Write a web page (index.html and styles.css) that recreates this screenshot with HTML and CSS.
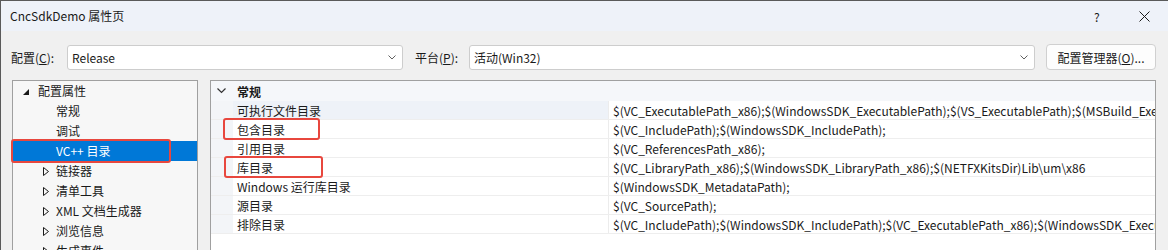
FILE: index.html
```html
<!DOCTYPE html>
<html lang="zh-CN">
<head>
<meta charset="utf-8">
<title>CncSdkDemo 属性页</title>
<link rel="stylesheet" href="styles.css">
</head>
<body>
<div class="window">
  <div class="titlebar">
    <span class="title">CncSdkDemo 属性页</span>
    <span class="help">?</span>
    <span class="close"><svg width="11" height="11" viewBox="0 0 11 11"><path d="M0.5 0.5 L10.5 10.5 M10.5 0.5 L0.5 10.5" stroke="#1a1a1a" stroke-width="1" fill="none"/></svg></span>
  </div>
  <div class="toolbar">
    <span class="label">配置(<u>C</u>):</span>
    <div class="combo combo-config"><span>Release</span><svg class="chev" width="8" height="5" viewBox="0 0 8 5"><path d="M0.5 0.5 L4 4 L7.5 0.5" stroke="#606060" fill="none"/></svg></div>
    <span class="label label-platform">平台(<u>P</u>):</span>
    <div class="combo combo-platform"><span>活动(Win32)</span><svg class="chev" width="8" height="5" viewBox="0 0 8 5"><path d="M0.5 0.5 L4 4 L7.5 0.5" stroke="#606060" fill="none"/></svg></div>
    <button class="btn">配置管理器(<u>O</u>)...</button>
  </div>
  <div class="main">
    <div class="tree">
      <div class="node"><svg class="tri" width="6" height="6" viewBox="0 0 6 6"><polygon points="6,0 6,6 0,6" fill="#1a1a1a"/></svg><span class="tlabel">配置属性</span></div>
      <div class="node child"><span class="tlabel">常规</span></div>
      <div class="node child"><span class="tlabel">调试</span></div>
      <div class="node child selected"><span class="tlabel">VC++ 目录</span></div>
      <div class="node child"><svg class="tri2" width="6" height="9" viewBox="0 0 6 9"><polygon points="0.5,0.5 5.5,4.5 0.5,8.5" fill="none" stroke="#1a1a1a"/></svg><span class="tlabel">链接器</span></div>
      <div class="node child"><svg class="tri2" width="6" height="9" viewBox="0 0 6 9"><polygon points="0.5,0.5 5.5,4.5 0.5,8.5" fill="none" stroke="#1a1a1a"/></svg><span class="tlabel">清单工具</span></div>
      <div class="node child"><svg class="tri2" width="6" height="9" viewBox="0 0 6 9"><polygon points="0.5,0.5 5.5,4.5 0.5,8.5" fill="none" stroke="#1a1a1a"/></svg><span class="tlabel">XML 文档生成器</span></div>
      <div class="node child"><svg class="tri2" width="6" height="9" viewBox="0 0 6 9"><polygon points="0.5,0.5 5.5,4.5 0.5,8.5" fill="none" stroke="#1a1a1a"/></svg><span class="tlabel">浏览信息</span></div>
      <div class="node child"><svg class="tri2" width="6" height="9" viewBox="0 0 6 9"><polygon points="0.5,0.5 5.5,4.5 0.5,8.5" fill="none" stroke="#1a1a1a"/></svg><span class="tlabel">生成事件</span></div>
      <div class="mark mark-tree"></div>
    </div>
    <div class="grid">
      <div class="cat">
        <div class="margin"><svg width="9" height="6" viewBox="0 0 9 6"><path d="M0.5 0.5 L4.5 4.5 L8.5 0.5" stroke="#333" stroke-width="1.2" fill="none"/></svg></div>
        <div class="catname">常规</div>
      </div>
      <div class="row current"><div class="margin"></div><div class="name">可执行文件目录</div><div class="value">$(VC_ExecutablePath_x86);$(WindowsSDK_ExecutablePath);$(VS_ExecutablePath);$(MSBuild_ExecutablePath);$(FxCopDir);$(PATH);</div></div>
      <div class="row"><div class="margin"></div><div class="name">包含目录</div><div class="value">$(VC_IncludePath);$(WindowsSDK_IncludePath);</div></div>
      <div class="row"><div class="margin"></div><div class="name">引用目录</div><div class="value">$(VC_ReferencesPath_x86);</div></div>
      <div class="row"><div class="margin"></div><div class="name">库目录</div><div class="value">$(VC_LibraryPath_x86);$(WindowsSDK_LibraryPath_x86);$(NETFXKitsDir)Lib\um\x86</div></div>
      <div class="row"><div class="margin"></div><div class="name">Windows 运行库目录</div><div class="value">$(WindowsSDK_MetadataPath);</div></div>
      <div class="row"><div class="margin"></div><div class="name">源目录</div><div class="value">$(VC_SourcePath);</div></div>
      <div class="row"><div class="margin"></div><div class="name">排除目录</div><div class="value">$(VC_IncludePath);$(WindowsSDK_IncludePath);$(VC_ExecutablePath_x86);$(WindowsSDK_ExecutablePath);$(VS_ExecutablePath);</div></div>
      <div class="mark mark-inc"></div>
      <div class="mark mark-lib"></div>
    </div>
  </div>
</div>
</body>
</html>
```
FILE: styles.css
```css
* { box-sizing: border-box; }
html, body { margin: 0; padding: 0; }
body {
  width: 1168px;
  height: 250px;
  overflow: hidden;
  background: #f0f0f0;
  font-family: "Noto Sans CJK SC", "Noto Sans", sans-serif;
  font-size: 12px;
  color: #1a1a1a;
}
.window {
  width: 1168px;
  height: 250px;
  border-left: 1px solid #5a5a5a;
  border-top: 1px solid #5a5a5a;
  background: #f0f0f0;
  overflow: hidden;
}
.titlebar {
  height: 30px;
  background: #eef2f9;
  display: flex;
  align-items: center;
  padding-left: 9px;
}
.title { flex: 1; line-height: 16px; }
.help { width: 14px; margin-right: 31px; font-size: 12px; }
.close { width: 20px; margin-right: 9px; display: flex; }
.toolbar {
  display: flex;
  align-items: center;
  height: 26px;
  margin-top: 13px;
  padding-left: 10px;
}
.label { width: 56px; }
.label-platform { margin-left: 12px; width: 54px; }
u { text-decoration: underline; text-underline-offset: 1px; }
.combo {
  height: 25px;
  background: #fff;
  border: 1px solid #cdcdcd;
  border-radius: 3px;
  display: flex;
  align-items: center;
  padding-left: 4px;
  padding-right: 6px;
}
.combo span { flex: 1; }
.combo-config { width: 336px; }
.combo-platform { width: 566px; }
.chev { flex: none; }
.btn {
  margin-left: 11px;
  width: 110px;
  height: 26px;
  background: #fdfdfd;
  border: 1px solid #d0d0d0;
  border-radius: 4px;
  font: inherit;
  color: #1a1a1a;
  padding: 0;
}
.main {
  display: flex;
  margin-top: 10px;
  padding-left: 11px;
  gap: 12px;
}
.tree {
  position: relative;
  width: 186px;
  height: 200px;
  background: #f7f7f7;
  border: 1px solid #a0a0a0;
  border-bottom: none;
}
.node {
  height: 20px;
  display: flex;
  align-items: center;
  padding-left: 10px;
}
.node .tri { margin-top: 1px; margin-right: 9px; }
.node.child { padding-left: 43px; }
.node.child .tri2 { margin-left: -13px; margin-right: 7px; }
.node.selected { background: #0078d7; color: #fff; }
.tlabel { line-height: 16px; }
.mark {
  position: absolute;
  border: 2px solid #e8473e;
  border-radius: 3px;
}
.mark-tree { left: -2px; top: 58px; width: 160px; height: 24px; }
.grid {
  position: relative;
  width: 946px;
  height: 200px;
  background: #fff;
  border: 1px solid #a0a0a0;
  border-bottom: none;
}
.cat {
  height: 20px;
  display: flex;
  background: #f5f7fa;
}
.margin {
  width: 22px;
  background: #f3f5f8;
  display: flex;
  align-items: center;
  justify-content: center;
  flex: none;
}
.cat .margin { background: transparent; padding-right: 2px; }
.catname {
  display: flex;
  align-items: center;
  padding-left: 4px;
  font-weight: bold;
}
.row {
  height: 19px;
  display: flex;
  border-bottom: 1px solid #eeeeee;
}
.name {
  width: 376px;
  flex: none;
  display: flex;
  align-items: center;
  padding-left: 4px;
  border-right: 1px solid #ececec;
}
.row.current .name { background: #eef2f8; }
.value {
  flex: 1;
  min-width: 0;
  display: flex;
  align-items: center;
  padding-left: 4px;
  white-space: nowrap;
  overflow: hidden;
}
.mark-inc { left: 12px; top: 37px; width: 97px; height: 22px; }
.mark-lib { left: 13px; top: 75px; width: 99px; height: 22px; }
```
